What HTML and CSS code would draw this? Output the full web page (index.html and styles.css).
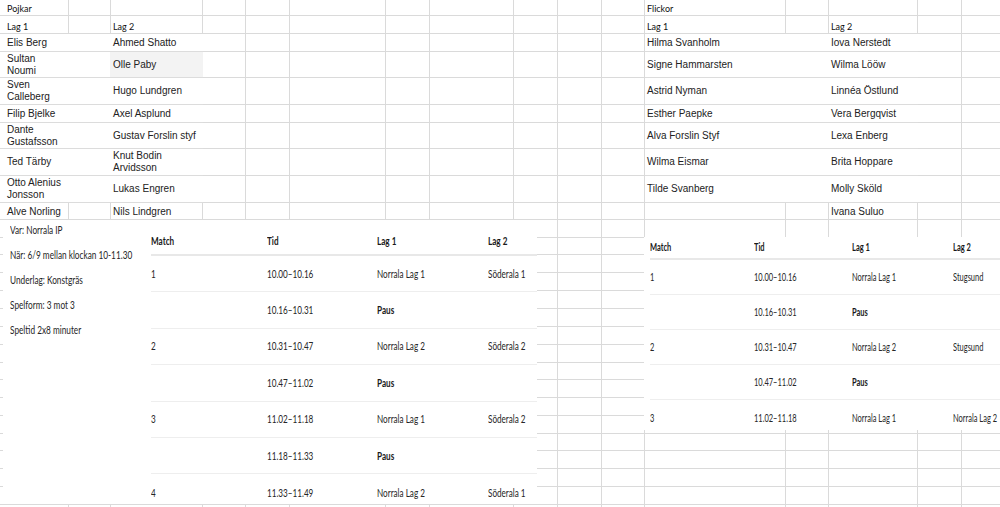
FILE: index.html
```html
<!DOCTYPE html>
<html lang="sv">
<head>
<meta charset="utf-8">
<title>Pojkar och Flickor – matchschema</title>
<link rel="stylesheet" href="styles.css">
</head>
<body>
<div class="sheet">
  <div class="top">
    <section class="roster boys">
      <div class="title">Pojkar</div>
      <div class="head"><span class="c1">Lag 1</span><span class="c2">Lag 2</span></div>
      <div class="body">
        <div class="r h18"><span class="c1">Elis Berg</span><span class="c2">Ahmed Shatto</span></div>
        <div class="r h26"><span class="c1">Sultan<br>Noumi</span><span class="c2 shade">Olle Paby</span></div>
        <div class="r h27"><span class="c1">Sven<br>Calleberg</span><span class="c2">Hugo Lundgren</span></div>
        <div class="r h18"><span class="c1">Filip Bjelke</span><span class="c2">Axel Asplund</span></div>
        <div class="r h26"><span class="c1">Dante<br>Gustafsson</span><span class="c2">Gustav Forslin styf</span></div>
        <div class="r h27"><span class="c1">Ted Tärby</span><span class="c2">Knut Bodin<br>Arvidsson</span></div>
        <div class="r h27"><span class="c1">Otto Alenius<br>Jonsson</span><span class="c2">Lukas Engren</span></div>
      </div>
      <div class="last"><span class="c1">Alve Norling</span><span class="c2">Nils Lindgren</span></div>
    </section>

    <section class="roster girls">
      <div class="title">Flickor</div>
      <div class="head"><span class="c1">Lag 1</span><span class="c2">Lag 2</span></div>
      <div class="body">
        <div class="r h18"><span class="c1">Hilma Svanholm</span><span class="c2">Iova Nerstedt</span></div>
        <div class="r h26"><span class="c1">Signe Hammarsten</span><span class="c2">Wilma Lööw</span></div>
        <div class="r h27"><span class="c1">Astrid Nyman</span><span class="c2">Linnéa Östlund</span></div>
        <div class="r h18"><span class="c1">Esther Paepke</span><span class="c2">Vera Bergqvist</span></div>
        <div class="r h26"><span class="c1">Alva Forslin Styf</span><span class="c2">Lexa Enberg</span></div>
        <div class="r h27"><span class="c1">Wilma Eismar</span><span class="c2">Brita Hoppare</span></div>
        <div class="r h27"><span class="c1">Tilde Svanberg</span><span class="c2">Molly Sköld</span></div>
      </div>
      <div class="last"><span class="c1"></span><span class="c2">Ivana Suluo</span></div>
    </section>
  </div>

  <div class="bottom">
    <div class="pane">
      <div class="info">
        <p>Var: Norrala IP</p>
        <p>När: 6/9 mellan klockan 10-11.30</p>
        <p>Underlag: Konstgräs</p>
        <p>Spelform: 3 mot 3</p>
        <p>Speltid 2x8 minuter</p>
      </div>
      <div class="games games-boys">
        <div class="g-head"><span>Match</span><span>Tid</span><span>Lag 1</span><span>Lag 2</span></div>
        <div class="g-row"><span>1</span><span>10.00–10.16</span><span>Norrala Lag 1</span><span>Söderala 1</span></div>
        <div class="g-row"><span></span><span>10.16–10.31</span><span class="b">Paus</span><span></span></div>
        <div class="g-row"><span>2</span><span>10.31–10.47</span><span>Norrala Lag 2</span><span>Söderala 2</span></div>
        <div class="g-row"><span></span><span>10.47–11.02</span><span class="b">Paus</span><span></span></div>
        <div class="g-row"><span>3</span><span>11.02–11.18</span><span>Norrala Lag 1</span><span>Söderala 2</span></div>
        <div class="g-row"><span></span><span>11.18–11.33</span><span class="b">Paus</span><span></span></div>
        <div class="g-row"><span>4</span><span>11.33–11.49</span><span>Norrala Lag 2</span><span>Söderala 1</span></div>
      </div>
    </div>

    <div class="games games-girls">
      <div class="g-head"><span>Match</span><span>Tid</span><span>Lag 1</span><span>Lag 2</span></div>
      <div class="g-row"><span>1</span><span>10.00–10.16</span><span>Norrala Lag 1</span><span>Stugsund</span></div>
      <div class="g-row"><span></span><span>10.16–10.31</span><span class="b">Paus</span><span></span></div>
      <div class="g-row"><span>2</span><span>10.31–10.47</span><span>Norrala Lag 2</span><span>Stugsund</span></div>
      <div class="g-row"><span></span><span>10.47–11.02</span><span class="b">Paus</span><span></span></div>
      <div class="g-row"><span>3</span><span>11.02–11.18</span><span>Norrala Lag 1</span><span>Norrala Lag 2</span></div>
    </div>
  </div>
</div>
</body>
</html>
```

FILE: styles.css
```css
* {
  box-sizing: border-box;
  margin: 0;
  padding: 0;
}

body {
  background: #fff;
}

/* spreadsheet canvas with its cell grid */
.sheet {
  width: 1000px;
  height: 507px;
  overflow: hidden;
  --g: linear-gradient(#dadada, #dadada);
  background:
    var(--g) 68px 0 / 1px 100% no-repeat,
    var(--g) 110px 0 / 1px 100% no-repeat,
    var(--g) 202px 0 / 1px 100% no-repeat,
    var(--g) 245px 0 / 1px 100% no-repeat,
    var(--g) 289px 0 / 1px 100% no-repeat,
    var(--g) 385px 0 / 1px 100% no-repeat,
    var(--g) 429px 0 / 1px 100% no-repeat,
    var(--g) 513px 0 / 1px 100% no-repeat,
    var(--g) 557px 0 / 1px 100% no-repeat,
    var(--g) 601px 0 / 1px 100% no-repeat,
    var(--g) 644px 0 / 1px 100% no-repeat,
    var(--g) 785px 0 / 1px 100% no-repeat,
    var(--g) 828px 0 / 1px 100% no-repeat,
    var(--g) 917px 0 / 1px 100% no-repeat,
    var(--g) 961px 0 / 1px 100% no-repeat,
    var(--g) 0 15px / 100% 1px no-repeat,
    var(--g) 0 33px / 100% 1px no-repeat,
    var(--g) 0 51px / 100% 1px no-repeat,
    var(--g) 0 77px / 100% 1px no-repeat,
    var(--g) 0 104px / 100% 1px no-repeat,
    var(--g) 0 122px / 100% 1px no-repeat,
    var(--g) 0 148px / 100% 1px no-repeat,
    var(--g) 0 175px / 100% 1px no-repeat,
    var(--g) 0 202px / 100% 1px no-repeat,
    var(--g) 0 219px / 100% 1px no-repeat,
    var(--g) 0 237px / 100% 1px no-repeat,
    var(--g) 0 254px / 100% 1px no-repeat,
    var(--g) 0 272px / 100% 1px no-repeat,
    var(--g) 0 290px / 100% 1px no-repeat,
    var(--g) 0 308px / 100% 1px no-repeat,
    var(--g) 0 326px / 100% 1px no-repeat,
    var(--g) 0 344px / 100% 1px no-repeat,
    var(--g) 0 362px / 100% 1px no-repeat,
    var(--g) 0 379px / 100% 1px no-repeat,
    var(--g) 0 397px / 100% 1px no-repeat,
    var(--g) 0 415px / 100% 1px no-repeat,
    var(--g) 0 433px / 100% 1px no-repeat,
    var(--g) 0 450px / 100% 1px no-repeat,
    var(--g) 0 468px / 100% 1px no-repeat,
    var(--g) 0 486px / 100% 1px no-repeat,
    var(--g) 0 504px / 100% 1px no-repeat,
    #fff;
}

/* ---------- rosters ---------- */
.top {
  display: flex;
  height: 220px;
}

.boys {
  width: 203px;
}

.girls {
  width: 273px;
  margin-left: 442px;
}

.title {
  height: 15px;
  padding-top: 2px;
  font: 9px/13px Lato, "Noto Sans", sans-serif;
  color: #111;
}

.head {
  display: flex;
  height: 19px;
  padding-top: 6px;
  font: 9px/12px Lato, "Noto Sans", sans-serif;
  color: #111;
}

.boys .title { padding-left: 7px; }
.girls .title { padding-left: 2px; }

.body {
  height: 169px;
  background: #fff;
}

.r,
.last {
  display: flex;
  font: 10px/12px "Liberation Sans", Arial, sans-serif;
  color: #222;
}

.r {
  border-bottom: 1px solid #dcdcdc;
}

.h18 { height: 18px; }
.h26 { height: 26px; }
.h27 { height: 27px; }

.last {
  height: 17px;
}

.r .c1, .r .c2,
.last .c1, .last .c2 {
  display: flex;
  align-items: center;
}

.boys .c1 { width: 110px; padding-left: 7px; }
.boys .c2 { flex: 1; padding-left: 3px; }
.girls .c1 { width: 184px; padding-left: 2px; }
.girls .c2 { flex: 1; padding-left: 2px; }

.shade {
  background: #f3f3f3;
}

/* ---------- info + match schedules ---------- */
.bottom {
  display: flex;
  align-items: flex-start;
}

.pane {
  display: flex;
  width: 534px;
  height: 284px;
  margin-left: 3px;
  background: #fff;
}

.info {
  display: flex;
  flex-direction: column;
  gap: 5px;
  width: 145px;
  padding-left: 7px;
  font: 11px/20px Lato, "Noto Sans", sans-serif;
  color: #262626;
}

.info p {
  white-space: nowrap;
  transform: scaleX(0.75);
  transform-origin: 0 50%;
}

.games {
  overflow: hidden;
  background: #fff;
  font: 11px/14px Lato, "Noto Sans", sans-serif;
  color: #262626;
  --squeeze: 0.74;
}

.games span {
  display: block;
  white-space: nowrap;
  transform: scaleX(var(--squeeze));
  transform-origin: 0 50%;
}

.g-head,
.g-row {
  display: grid;
}

.g-head {
  align-items: start;
  border-bottom: 2px solid #e8e8e8;
  font-weight: 700;
  color: #1a1a1a;
}

.g-row {
  align-items: center;
  border-bottom: 1px solid #eeeeee;
}

.g-row:last-child {
  border-bottom: 0;
}

.games .b {
  font-weight: 700;
  color: #1a1a1a;
}

.games-boys {
  width: 389px;
  height: 284px;
  padding-left: 3px;
}

.games-boys .g-head,
.games-boys .g-row {
  grid-template-columns: 116px 110px 111px 1fr;
}

.games-boys .g-head {
  height: 36px;
  padding-top: 14px;
}

.games-boys .g-row {
  height: 36.4px;
}

.games-girls {
  width: 356px;
  height: 193px;
  margin-top: 17px;
  margin-left: 107px;
  padding-left: 6px;
  --squeeze: 0.68;
}

.games-girls .g-head,
.games-girls .g-row {
  grid-template-columns: 104px 98px 101px 1fr;
}

.games-girls .g-head {
  height: 23px;
  padding-top: 3px;
}

.games-girls .g-row {
  height: 35px;
}
```
